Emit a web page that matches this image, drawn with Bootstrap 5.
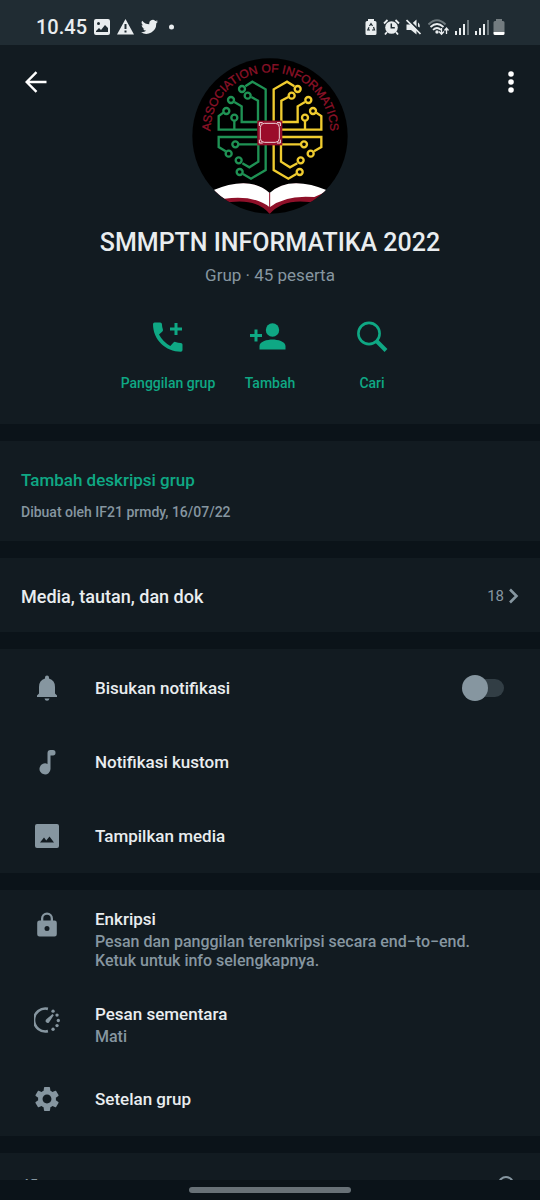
<!DOCTYPE html>
<html lang="id">
<head>
<meta charset="utf-8">
<meta name="viewport" content="width=device-width, initial-scale=1">
<title>Info grup</title>
<link rel="stylesheet" href="https://cdn.jsdelivr.net/npm/bootstrap@5.3.0/dist/css/bootstrap.min.css">
<style>
  :root { --panel: #121b21; --gap: #0b1319; --green: #0fa884; --muted: #8696a0; --ink: #e9edef; }
  body { background: var(--gap); color: var(--ink); font-family: Roboto, "Noto Sans", sans-serif; font-weight: 500; font-size: 17px; }
  svg { display: block; flex: none; }
  .status-bar { background: #202c33; height: 45px; padding: 8px 35px 0 36px; }
  .status-icons { height: 38px; gap: 6px; }
  .status-notes { gap: 7px; }
  .battery { margin-left: -2px; }
  .clock { font-size: 20px; line-height: 24px; }
  .scroller { scrollbar-width: none; }
  .panel { background: var(--panel); margin-bottom: 17px; flex: none; }
  .plain { background: none; border: 0; padding: 0; color: inherit; font-weight: inherit; text-align: left; }
  .hero { padding-bottom: 31px; }
  .hero-top { display: grid; grid-template-columns: 1fr auto 1fr; align-items: start; padding: 13px 17px 0 20px; }
  .hero-logo { margin-left: -3px; }
  .tool { width: 32px; height: 32px; margin-top: 8px; display: grid; place-items: center; }
  .tool-end { width: 24px; justify-self: end; }
  .group-name { font-size: 25px; line-height: 32px; font-weight: 500; margin: 13px 0 0; }
  .group-meta { font-size: 17px; line-height: 22px; color: var(--muted); font-weight: 400; margin: 5px 0 0; }
  .action { width: 102px; gap: 19px; color: var(--green); font-size: 14px; line-height: 20px; text-align: center; }
  .actions { margin-top: 34px; }
  .describe { height: 100px; padding: 27px 21px 0; }
  .describe a { color: var(--green); line-height: 24px; font-size: 17px; }
  .small-note { color: var(--muted); font-size: 15px; line-height: 20px; font-weight: 400; }
  .created { margin-top: 10px; font-size: 14px; font-weight: 500; }
  .media-row { background: var(--panel); height: 74px; padding: 2px 21px 0; font-size: 18px; }
  .item { padding: 0 36px 0 34px; min-height: 74px; gap: 35px; }
  .item-tall { padding-top: 16px; padding-bottom: 16px; min-height: 0; }
  .item svg { color: var(--muted); }
  .item-title { line-height: 24px; }
  .item-note { color: var(--muted); line-height: 19px; font-size: 16px; margin-top: 1px; }
  .group-switches { padding-top: 2px; }
  .group-settings { padding-top: 1px; }
  .toggle { appearance: none; display: flex; align-items: center; width: 42px; height: 26px; margin: 0; }
  .toggle::before { content: ""; width: 26px; height: 26px; border-radius: 50%; background: #8696a0; z-index: 1; }
  .toggle::after { content: ""; width: 29px; height: 18px; margin-left: -13px; border-radius: 0 9px 9px 0; background: #323e45; }
  .toggle:checked { transform: scaleX(-1); }
  .members { margin: 0; padding: 22px 21px; min-height: 0; }
  .gesture { height: 20px; background: var(--gap); }
  .gesture span { width: 30%; height: 6px; border-radius: 3px; background: #687177; }
</style>
<script src="https://cdn.jsdelivr.net/npm/bootstrap@5.3.0/dist/js/bootstrap.bundle.min.js"></script>
</head>
<body>
<div class="d-flex flex-column vh-100">
  <header class="status-bar d-flex justify-content-between flex-shrink-0">
    <div class="status-icons status-notes d-flex align-items-center">
      <span class="clock">10.45</span>
      <svg width="16" height="16" viewBox="0 0 16 16" fill="#e9edef" fill-rule="evenodd"><path d="M2 0h12q2 0 2 2v12q0 2-2 2H2q-2 0-2-2V2q0-2 2-2zm0 13h12V9l-3-3-4 5-2-2-3 3zM4.500 3a1.500 1.500 0 1 0 0 3 1.500 1.500 0 0 0 0-3z"/></svg>
      <svg width="17" height="16" viewBox="0 0 17 16" fill="#e9edef" fill-rule="evenodd"><path d="M8.500 0 17 15.500H0zM7.500 5v5h2V5zm0 6.500v2h2v-2z"/></svg>
      <svg width="17" height="16" viewBox="0 0 24 20" fill="#e9edef"><path d="M24 2.400a10 10 0 0 1-2.800.8A5 5 0 0 0 23.300.5a10 10 0 0 1-3.100 1.200 4.900 4.900 0 0 0-8.400 4.500A14 14 0 0 1 1.700 1a4.900 4.900 0 0 0 1.500 6.600 5 5 0 0 1-2.200-.6 4.900 4.900 0 0 0 4 4.900 5 5 0 0 1-2.200.1 4.900 4.900 0 0 0 4.600 3.400A10 10 0 0 1 0 17.400 14 14 0 0 0 21.500 5Q23 4 24 2.400z"/></svg>
      <svg width="20" height="16" viewBox="1 0 20 16" fill="#e9edef"><circle cx="7.500" cy="8" r="2.500"/></svg>
    </div>
    <div class="status-icons d-flex align-items-center">
      <svg width="12" height="16" viewBox="0 0 12 16"><path d="M3 0h6v2h1q1.500 0 1.500 1.500v11Q11.500 16 10 16H2Q.5 16 .5 14.500v-11Q.5 2 2 2h1z" fill="#e9edef"/><path d="m4.500 7 1.500-2.300L7.500 7M8.500 8l1 3H7M5 11H2.800L4 8.300" fill="none" stroke="#202c33" stroke-width="1.200"/></svg>
      <svg width="17" height="16" viewBox="0 0 17 16"><g stroke="#e9edef" stroke-width="1.800" fill="none"><path d="M1 4.500 4.500 1M16 4.500 12.500 1M4 13l-2 2.500M13 13l2 2.500"/></g><circle cx="8.500" cy="8.500" r="6.300" fill="#e9edef"/><path d="M8.300 4.500v4.300h3.500" stroke="#202c33" stroke-width="1.500" fill="none"/></svg>
      <svg width="16" height="16" viewBox="0 0 16 16" fill="#e9edef"><path d="M.5 5.500H5L10.500.5v15L5 11H.5z"/><path d="M12 3.500q2.500 2 1.500 5L12 7.500z"/><path d="m1.500 0 14 14" stroke="#202c33" stroke-width="2"/><path d="m.5 1 14 14" stroke="#e9edef" stroke-width="1.700"/></svg>
      <svg width="21" height="17" viewBox="0 0 21 17" fill="none"><path d="M.5 5.500q8.500-8.500 17 0" stroke="#6c777c" stroke-width="2"/><path d="M2.500 8q6.500-6 13 0M5 10.800q4-3.600 8 0" stroke="#e9edef" stroke-width="1.800"/><circle cx="9" cy="13" r="1.700" fill="#e9edef"/><path d="M13.500 9v6m-2.500-2.500 2.500 2.800 2.500-2.800M18.500 15V9.500M16.500 11.500l2-2.500 2 2.500" stroke="#e9edef" stroke-width="1.300"/></svg>
      <svg width="14" height="16" viewBox="0 0 14 16" fill="#e9edef"><path d="M0 12h2v4H0zM4 9h2v7H4zM8 5h2v11H8z"/><path fill="#6c777c" d="M12 1h2v15h-2z"/></svg>
      <svg width="14" height="16" viewBox="0 0 14 16" fill="#e9edef"><path d="M0 12h2v4H0zM4 9h2v7H4zM8 5h2v11H8z"/><path fill="#6c777c" d="M12 1h2v15h-2z"/></svg>
      <svg class="battery" width="12" height="16" viewBox="0 0 12 16"><path d="M3 0h6v2h1q1.500 0 1.500 1.500V13H.5V3.500Q.5 2 2 2h1z" fill="#737c80"/><path d="M.5 13h11v1.500Q11.500 16 10 16H2Q.5 16 .5 14.500z" fill="#fff"/></svg>
    </div>
  </header>

  <main class="scroller d-flex flex-column flex-grow-1 overflow-auto">
    <section class="panel hero">
      <div class="hero-top">
        <button class="plain tool" aria-label="Kembali"><svg width="22" height="22" viewBox="0 0 22 22" fill="none" stroke="#fff" stroke-width="2.400"><path d="M21.500 11H2M11.500 1.200 1.700 11l9.800 9.800"/></svg></button>
        <svg class="hero-logo" width="156" height="156" viewBox="21 25 468 468" role="img" aria-label="Association of Informatics">
          <defs><path id="ring" d="M76 248A180 180 0 1 1 436 248"/><clipPath id="disc"><circle cx="255" cy="259" r="233"/></clipPath></defs>
          <circle cx="255" cy="259" r="233" fill="#000"/>
          <text font-family="Liberation Sans, sans-serif" font-size="36" font-weight="400" fill="#8c1228" stroke="#8c1228" stroke-width="1"><textPath href="#ring" startOffset="50%" text-anchor="middle">ASSOCIATION OF INFORMATICS</textPath></text>
          <g fill="none" stroke="#1f9254" stroke-width="7">
            <path d="M242 213V119l-40-23-21 14M219 213v-60l-20-11M219 217h-49v-47l-22-13M217 240H101v-41l14-10M148 238v-24M217 262H101v30l21 13M219 284h-57M220 286v50l-27 17-21-12M242 286v75l-44 26-24-14"/>
            <circle cx="171" cy="118" r="9"/><circle cx="188" cy="138" r="9"/><circle cx="138" cy="151" r="9"/><circle cx="124" cy="184" r="9"/><circle cx="148" cy="204" r="9"/><circle cx="131" cy="312" r="9"/><circle cx="151" cy="284" r="9"/><circle cx="161" cy="332" r="9"/><circle cx="164" cy="367" r="9"/>
          </g>
          <g fill="none" stroke="#f0cc2f" stroke-width="7">
            <path d="M266 213V119l40-23 22 14M289 213v-60l21-11M289 217h49v-47l22-13M291 240h118v-41l-15-10M360 238v-24M291 262h118v30l-22 13M289 284h57M288 286v50l27 17 22-12M266 286v75l44 26 24-14"/>
            <circle cx="338" cy="118" r="9"/><circle cx="320" cy="138" r="9"/><circle cx="370" cy="151" r="9"/><circle cx="384" cy="184" r="9"/><circle cx="360" cy="204" r="9"/><circle cx="377" cy="312" r="9"/><circle cx="357" cy="284" r="9"/><circle cx="347" cy="332" r="9"/><circle cx="344" cy="367" r="9"/>
          </g>
          <rect x="217" y="213" width="75" height="74" fill="#960f2b"/>
          <rect x="226" y="221" width="57" height="57" rx="12" fill="#9b0c2a" stroke="#efd3d8" stroke-width="3"/>
          <path d="M223 229v-10h10M276 219h10v10M286 270v10h-10M233 280h-10v-10" fill="none" stroke="#f5e6e8" stroke-width="3"/>
          <g clip-path="url(#disc)">
            <path d="M85 425Q195 375 254 432 313 375 424 425L400 462Q300 440 254 493 210 440 110 462z" fill="#8e1029"/>
            <path d="M80 423Q195 375 254 430 313 375 430 423L388 442Q300 435 254 473 208 435 118 447z" fill="#fff"/>
            <path d="M254 430v60" stroke="#8e1029" stroke-width="3"/>
          </g>
        </svg>
        <button class="plain tool tool-end" aria-label="Menu"><svg width="6" height="22" viewBox="0 0 6 22" fill="#fff"><circle cx="3" cy="3" r="2.800"/><circle cx="3" cy="11" r="2.800"/><circle cx="3" cy="19" r="2.800"/></svg></button>
      </div>
      <h1 class="group-name text-center">SMMPTN INFORMATIKA 2022</h1>
      <p class="group-meta text-center">Grup · 45 peserta</p>
      <div class="actions d-flex justify-content-center">
        <button class="plain action d-flex flex-column align-items-center"><svg width="34" height="34" viewBox="0 0 34 34" fill="currentColor"><path d="M3.600 2.500h5.600q1.600 0 1.700 1.600.1 2.800 1 5.300.4 1.200-.5 2L8 14.500q4 7.500 11.300 11.400l3.200-3.500q.8-.9 2-.5 2.500.9 5.300 1 1.700.1 1.700 1.700v5.500q0 1.600-1.700 1.600C14.500 31.700 2 19.500 2 4.200q0-1.700 1.600-1.700z"/><path d="M23.500 3h3v4.500H31v3h-4.500V15h-3v-4.500H19v-3h4.500z"/></svg>Panggilan grup</button>
        <button class="plain action d-flex flex-column align-items-center"><svg width="44" height="34" viewBox="0 0 44 34" fill="currentColor"><circle cx="24.500" cy="10" r="6.700"/><path d="M11.500 29.500V26c0-4.500 8-6.500 13-6.500s13 2 13 6.500v3.500zM6.500 9.500h3V14H14v3H9.500v4.500h-3V17H2v-3h4.500z"/></svg>Tambah</button>
        <button class="plain action d-flex flex-column align-items-center"><svg width="34" height="34" viewBox="0 0 34 34" fill="none" stroke="currentColor"><circle cx="14" cy="13.500" r="10.600" stroke-width="2.600"/><path d="m21.500 21 9.500 9.500" stroke-width="4"/></svg>Cari</button>
      </div>
    </section>

    <section class="panel describe">
      <a href="#" class="d-block text-decoration-none">Tambah deskripsi grup</a>
      <div class="small-note created">Dibuat oleh IF21 prmdy, 16/07/22</div>
    </section>

    <button class="plain panel media-row d-flex align-items-center justify-content-between">
      <span>Media, tautan, dan dok</span>
      <span class="small-note d-flex align-items-center gap-1">18 <svg width="11" height="16" viewBox="0 0 11 16" fill="none" stroke="currentColor" stroke-width="2.600"><path d="m2 1.500 6.500 6.500L2 14.500"/></svg></span>
    </button>

    <section class="panel group-switches">
      <div class="item d-flex align-items-center">
        <svg width="26" height="28" viewBox="0 0 26 28" fill="currentColor"><path d="M13 1.500q2 0 2 2v1q6 1.600 6 8.500v6.500l2 2V23H3v-1.500l2-2V13q0-6.900 6-8.500v-1q0-2 2-2zM10.500 24.500h5q-.5 2.200-2.500 2.200t-2.500-2.200z"/></svg>
        <label class="item-title flex-grow-1" for="mute">Bisukan notifikasi</label>
        <input class="toggle" type="checkbox" role="switch" id="mute">
      </div>
      <button class="plain item w-100 d-flex align-items-center">
        <svg width="26" height="28" viewBox="0 0 26 28" fill="currentColor"><path d="M13.500 5q0-3 3-3H19q2.500 0 2.500 2.700T19 7.500h-2.500V21a5.500 5.500 0 1 1-3-5z"/></svg>
        <span class="item-title">Notifikasi kustom</span>
      </button>
      <button class="plain item w-100 d-flex align-items-center">
        <svg width="26" height="26" viewBox="0 0 26 26" fill="currentColor" fill-rule="evenodd"><path d="M3 1h20q2 0 2 2v20q0 2-2 2H3q-2 0-2-2V3q0-2 2-2zm3 18.500h14l-4.500-6-3.200 4-2.300-3z"/></svg>
        <span class="item-title">Tampilkan media</span>
      </button>
    </section>

    <section class="panel group-settings">
      <button class="plain item item-tall w-100 d-flex align-items-start">
        <svg width="26" height="28" viewBox="0 0 26 28" fill="currentColor" fill-rule="evenodd" class="mt-1"><path d="M7 9.500V7.500a6 6 0 0 1 12 0v2h1.500q2.300 0 2.300 2.300v11.400q0 2.300-2.300 2.300h-15q-2.300 0-2.300-2.300V11.800q0-2.300 2.300-2.300zm2.300 0h7.400v-2a3.700 3.700 0 0 0-7.400 0zM13 15a2.500 2.500 0 1 0 0 5 2.500 2.500 0 0 0 0-5z"/></svg>
        <span><span class="item-title d-block">Enkripsi</span><span class="item-note d-block">Pesan dan panggilan terenkripsi secara end−to−end. Ketuk untuk info selengkapnya.</span></span>
      </button>
      <button class="plain item item-tall w-100 d-flex align-items-start">
        <svg width="26" height="28" viewBox="0 0 28 30" fill="none" stroke="currentColor" stroke-width="2.800" class="mt-1"><path d="M15 3A12.300 12.300 0 1 0 15 27"/><g fill="currentColor" stroke="none"><circle cx="20.500" cy="5.500" r="1.800"/><circle cx="24.800" cy="9.700" r="1.800"/><circle cx="26.200" cy="15.500" r="1.800"/><circle cx="24.800" cy="21" r="1.800"/><circle cx="20.500" cy="25" r="1.800"/><path d="m20 8.500 1.300 1.300-5 7.500q-1.400 1.800-3.200.2-1.400-1.600.2-3.200z"/></g></svg>
        <span><span class="item-title d-block">Pesan sementara</span><span class="item-note d-block">Mati</span></span>
      </button>
      <button class="plain item w-100 d-flex align-items-center">
        <svg width="26" height="26" viewBox="1.800 1.500 20.400 21" fill="currentColor"><path d="M19.140 12.940c.04-.3.060-.61.060-.94 0-.32-.02-.64-.07-.94l2.030-1.580a.49.49 0 0 0 .12-.61l-1.920-3.320a.488.488 0 0 0-.59-.22l-2.390.96c-.5-.38-1.030-.7-1.620-.94l-.36-2.540a.484.484 0 0 0-.48-.41h-3.840c-.24 0-.43.17-.47.41l-.36 2.540c-.59.24-1.130.57-1.620.94l-2.390-.96c-.22-.08-.47 0-.59.22L2.740 8.870c-.12.21-.08.47.12.61l2.030 1.580c-.05.3-.09.63-.09.94s.02.64.07.94l-2.030 1.580a.49.49 0 0 0-.12.61l1.920 3.320c.12.22.37.29.59.22l2.390-.96c.5.38 1.030.7 1.620.94l.36 2.540c.05.24.24.41.48.41h3.840c.24 0 .44-.17.47-.41l.36-2.540c.59-.24 1.130-.56 1.620-.94l2.390.96c.22.08.47 0 .59-.22l1.920-3.320c.12-.22.070-.47-.12-.61zM12 15.600c-1.980 0-3.600-1.620-3.600-3.600s1.620-3.600 3.600-3.600 3.600 1.620 3.600 3.600-1.620 3.600-3.600 3.600z"/></svg>
        <span class="item-title">Setelan grup</span>
      </button>
    </section>

    <section class="panel members d-flex justify-content-between align-items-start flex-shrink-1 flex-grow-1 overflow-hidden small-note">
      <span>45 peserta</span>
      <svg width="22" height="22" viewBox="0 0 22 22" fill="none" stroke="currentColor" stroke-width="2"><circle cx="9" cy="9" r="7"/><path d="m14 14 6 6"/></svg>
    </section>
  </main>

  <footer class="gesture d-flex justify-content-center align-items-center flex-shrink-0"><span></span></footer>
</div>
</body>
</html>
